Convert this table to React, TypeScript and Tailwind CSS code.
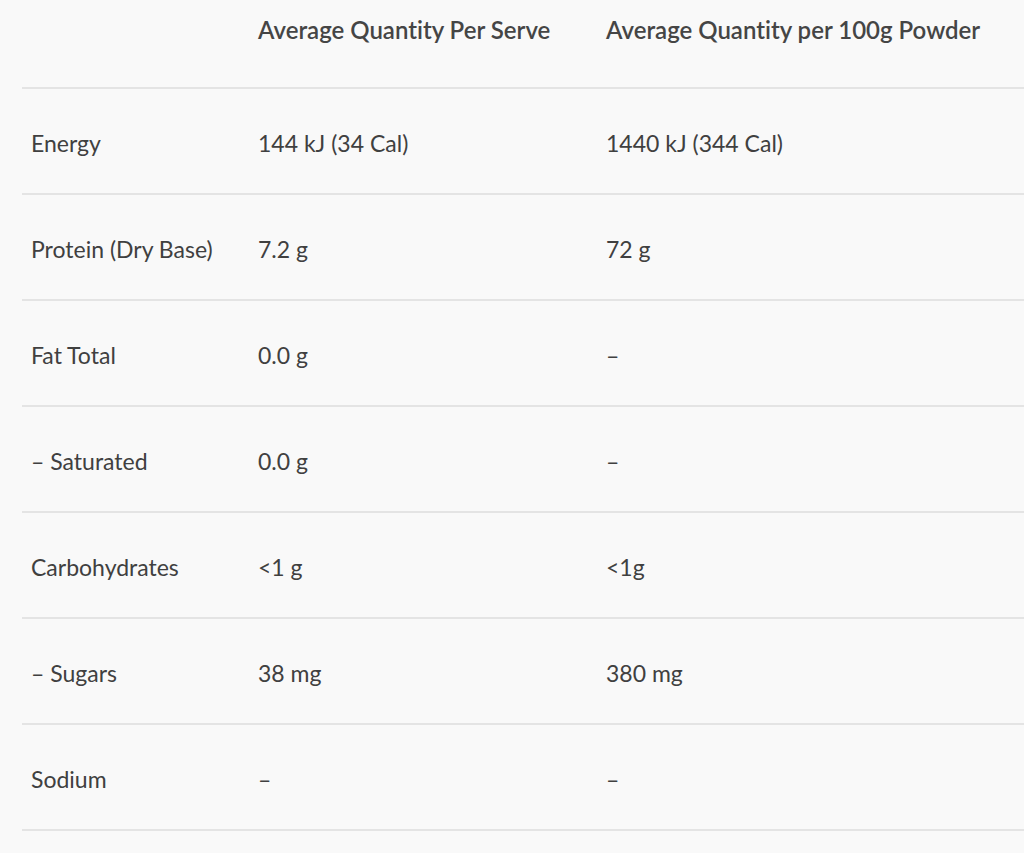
const rows: [string, string, string][] = [
  ["Energy", "144 kJ (34 Cal)", "1440 kJ (344 Cal)"],
  ["Protein (Dry Base)", "7.2 g", "72 g"],
  ["Fat Total", "0.0 g", "–"],
  ["– Saturated", "0.0 g", "–"],
  ["Carbohydrates", "<1 g", "<1g"],
  ["– Sugars", "38 mg", "380 mg"],
  ["Sodium", "–", "–"],
];

export default function App() {
  return (
    <div
      className="min-h-[853px] bg-[#f9f9f9] text-[#404040] pl-[22px] [font-variant-ligatures:none]"
      style={{ fontFamily: "Lato, 'Open Sans', sans-serif" }}
    >
      <div className="grid grid-cols-[236px_348px_1fr] h-[89px] border-b-2 border-[#e4e4e4]">
        <div />
        <div className="pt-[14px] text-[24px] leading-[32px] font-semibold text-[#454545]">
          Average Quantity Per Serve
        </div>
        <div className="pt-[14px] text-[24px] leading-[32px] font-semibold text-[#454545]">
          Average Quantity per 100g Powder
        </div>
      </div>
      {rows.map((r) => (
        <div
          key={r[0]}
          className="grid grid-cols-[236px_348px_1fr] h-[106px] items-center border-b-2 border-[#e4e4e4] text-[23px] leading-[32px]"
        >
          <div className="pl-[9px] pt-[4px]">{r[0]}</div>
          <div className="pt-[4px]">{r[1]}</div>
          <div className="pt-[4px]">{r[2]}</div>
        </div>
      ))}
    </div>
  );
}
